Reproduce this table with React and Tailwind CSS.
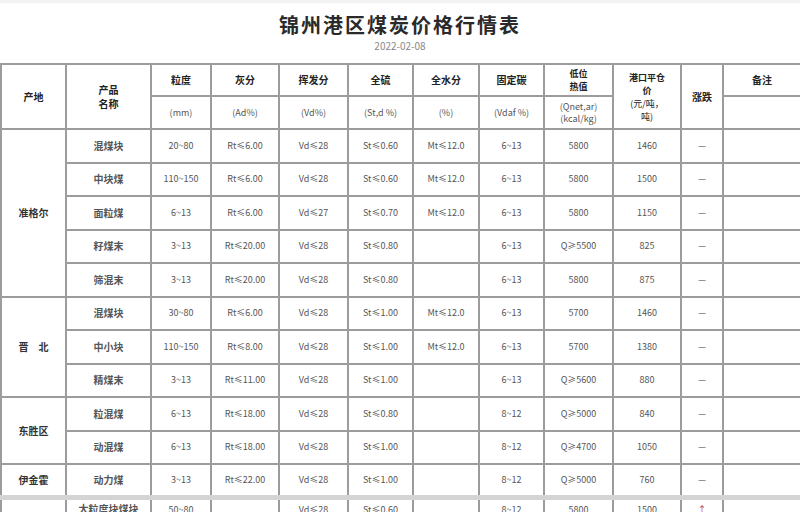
import React from "react";

const groups = [
  {
    origin: "准格尔",
    rows: [
      ["混煤块", "20~80", "Rt≤6.00", "Vd≤28", "St≤0.60", "Mt≤12.0", "6~13", "5800", "1460"],
      ["中块煤", "110~150", "Rt≤6.00", "Vd≤28", "St≤0.60", "Mt≤12.0", "6~13", "5800", "1500"],
      ["面粒煤", "6~13", "Rt≤6.00", "Vd≤27", "St≤0.70", "Mt≤12.0", "6~13", "5800", "1150"],
      ["籽煤末", "3~13", "Rt≤20.00", "Vd≤28", "St≤0.80", "", "6~13", "Q≥5500", "825"],
      ["筛混末", "3~13", "Rt≤20.00", "Vd≤28", "St≤0.80", "", "6~13", "5800", "875"],
    ],
  },
  {
    origin: "晋　北",
    rows: [
      ["混煤块", "30~80", "Rt≤6.00", "Vd≤28", "St≤1.00", "Mt≤12.0", "6~13", "5700", "1460"],
      ["中小块", "110~150", "Rt≤8.00", "Vd≤28", "St≤1.00", "Mt≤12.0", "6~13", "5700", "1380"],
      ["精煤末", "3~13", "Rt≤11.00", "Vd≤28", "St≤1.00", "", "6~13", "Q≥5600", "880"],
    ],
  },
  {
    origin: "东胜区",
    rows: [
      ["粒混煤", "6~13", "Rt≤18.00", "Vd≤28", "St≤0.80", "", "8~12", "Q≥5000", "840"],
      ["动混煤", "6~13", "Rt≤18.00", "Vd≤28", "St≤1.00", "", "8~12", "Q≥4700", "1050"],
    ],
  },
  {
    origin: "伊金霍",
    rows: [["动力煤", "3~13", "Rt≤22.00", "Vd≤28", "St≤1.00", "", "8~12", "Q≥5000", "760"]],
  },
];

const B = "border-2 border-[#9c9c9c]";
const cell = `${B} text-center align-middle text-[9px] text-[#555] leading-[12px] p-0`;
const head = `${B} text-center align-middle text-[10px] font-bold text-[#222] leading-[14px] p-0`;
const headSm = `${B} text-center align-middle text-[9px] font-bold text-[#222] leading-[13px] p-0`;

export default function App() {
  const font = { fontFamily: '"Noto Sans CJK SC", "Noto Sans", sans-serif' };
  return (
    <div className="w-[800px] h-[512px] overflow-hidden bg-white" style={font}>
      <div className="h-[3px] bg-[#f2f2f2]" />
      <div className="flex flex-col items-center pt-[10px] h-[60px]">
        <div className="text-[20px] font-bold text-[#2a2a2a] leading-[24px] tracking-[2px]">
          锦州港区煤炭价格行情表
        </div>
        <div className="text-[10px] text-[#888] leading-[14px] mt-[2px]">2022-02-08</div>
      </div>
      <table className="table-fixed border-collapse w-[800px]">
        <colgroup>
          <col className="w-[65px]" />
          <col className="w-[85px]" />
          <col className="w-[60px]" />
          <col className="w-[68px]" />
          <col className="w-[69px]" />
          <col className="w-[65px]" />
          <col className="w-[66px]" />
          <col className="w-[65px]" />
          <col className="w-[69px]" />
          <col className="w-[68px]" />
          <col className="w-[42px]" />
          <col className="w-[78px]" />
        </colgroup>
        <thead>
          <tr className="h-[32px]">
            <th rowSpan={2} className={head}>产地</th>
            <th rowSpan={2} className={head}>产品<br />名称</th>
            <th className={head}>粒度</th>
            <th className={head}>灰分</th>
            <th className={head}>挥发分</th>
            <th className={head}>全硫</th>
            <th className={head}>全水分</th>
            <th className={head}>固定碳</th>
            <th className={headSm}>低位<br />热值</th>
            <th rowSpan={2} className={headSm}>港口平仓<br />价<br /><span className="font-normal">(元/吨，<br />吨)</span></th>
            <th rowSpan={2} className={head}>涨跌</th>
            <th className={head}>备注</th>
          </tr>
          <tr className="h-[33px]">
            <th className={`${cell} font-normal`}>(mm)</th>
            <th className={`${cell} font-normal`}>(Ad%)</th>
            <th className={`${cell} font-normal`}>(Vd%)</th>
            <th className={`${cell} font-normal`}>(St,d %)</th>
            <th className={`${cell} font-normal`}>(%)</th>
            <th className={`${cell} font-normal`}>(Vdaf %)</th>
            <th className={`${cell} font-normal text-[8px] leading-[12px]`}>(Qnet,ar)<br />(kcal/kg)</th>
            <th className={cell}></th>
          </tr>
        </thead>
        <tbody>
          {groups.map((g) =>
            g.rows.map((r, i) => (
              <tr key={g.origin + i} className="h-[33.5px]">
                {i === 0 && (
                  <td rowSpan={g.rows.length} className={`${head} font-bold text-[#333]`}>
                    {g.origin}
                  </td>
                )}
                <td className={`${cell} font-bold text-[#444] text-[10px]`}>{r[0]}</td>
                {r.slice(1).map((v, j) => (
                  <td key={j} className={cell}>{v}</td>
                ))}
                <td className={cell}>—</td>
                <td className={cell}></td>
              </tr>
            ))
          )}
          <tr className="h-[33px] border-t-[5px] border-[#d4d4d4]">
            <td className={`${cell} align-top`}></td>
            <td className={`${cell} align-top font-bold text-[#444] text-[10px] pt-[3px]`}>大粒度块煤块</td>
            <td className={`${cell} align-top pt-[4px]`}>50~80</td>
            <td className={cell}></td>
            <td className={`${cell} align-top pt-[4px]`}>Vd≤28</td>
            <td className={`${cell} align-top pt-[4px]`}>St≤0.60</td>
            <td className={cell}></td>
            <td className={`${cell} align-top pt-[4px]`}>8~12</td>
            <td className={`${cell} align-top pt-[4px]`}>5800</td>
            <td className={`${cell} align-top pt-[4px]`}>1500</td>
            <td className={`${cell} align-top pt-[4px] text-[#c0392b]`}>↑</td>
            <td className={cell}></td>
          </tr>
        </tbody>
      </table>
    </div>
  );
}
